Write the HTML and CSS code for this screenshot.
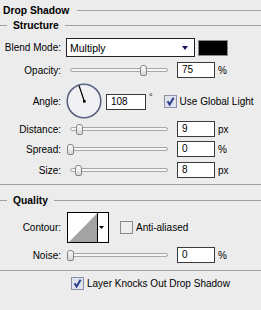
FILE: index.html
```html
<!DOCTYPE html>
<html>
<head>
<meta charset="utf-8">
<link rel="stylesheet" href="styles.css">
</head>
<body>
<div class="panel">
  <div class="title-row"><span class="title">Drop Shadow</span><span class="rule"></span></div>
  <div class="group-head"><span class="rule stub"></span><span class="group-title">Structure</span><span class="rule"></span></div>

  <div class="row row-blend">
    <span class="lbl">Blend Mode:</span>
    <div class="select"><span>Multiply</span><span class="arrow"></span></div>
    <div class="swatch"></div>
  </div>

  <div class="row row-slider r-opacity">
    <span class="lbl">Opacity:</span>
    <div class="slider"><div class="track"></div><div class="thumb" style="left:74px"></div></div>
    <div class="field">75</div><span class="unit">%</span>
  </div>

  <div class="row row-angle">
    <span class="lbl">Angle:</span>
    <svg class="dial" width="36" height="36" viewBox="0 0 36 36">
      <circle cx="18" cy="18" r="16.8" fill="#f1f1f3" stroke="#5b6283" stroke-width="1.6"/>
      <line x1="18.3" y1="18.3" x2="13" y2="2.5" stroke="#000" stroke-width="1.2"/>
      <rect x="17" y="17" width="2.6" height="2.6" fill="#000"/>
    </svg>
    <div class="field angle">108</div><span class="deg">°</span>
    <svg class="cb cb-global" width="13" height="13" viewBox="0 0 13 13">
      <rect x="0.5" y="0.5" width="12" height="12" fill="#dfe1ec" stroke="#8a90a6"/>
      <path d="M3.6 6.3 L5.6 9.6 L9.6 2.8" stroke="#2b3f8e" stroke-width="2" fill="none"/>
    </svg>
    <span class="cb-text">Use Global Light</span>
  </div>

  <div class="row row-slider r-distance">
    <span class="lbl">Distance:</span>
    <div class="slider"><div class="track"></div><div class="thumb" style="left:10px"></div></div>
    <div class="field">9</div><span class="unit">px</span>
  </div>

  <div class="row row-slider r-spread">
    <span class="lbl">Spread:</span>
    <div class="slider"><div class="track"></div><div class="thumb" style="left:1px"></div></div>
    <div class="field">0</div><span class="unit">%</span>
  </div>

  <div class="row row-slider r-size">
    <span class="lbl">Size:</span>
    <div class="slider"><div class="track"></div><div class="thumb" style="left:9px"></div></div>
    <div class="field">8</div><span class="unit">px</span>
  </div>

  <div class="sep sep-1"></div>

  <div class="group-head quality"><span class="rule stub"></span><span class="group-title">Quality</span><span class="rule"></span></div>

  <div class="row row-contour">
    <span class="lbl">Contour:</span>
    <svg class="contour" width="42" height="31" viewBox="0 0 42 31">
      <rect x="0.5" y="0.5" width="41" height="30" fill="#fff" stroke="#000"/>
      <polygon points="2,30 30,1.5 30,30" fill="#a3a3a3"/>
      <line x1="30.5" y1="0" x2="30.5" y2="31" stroke="#000"/>
      <polygon points="32,14 37,14 34.5,17" fill="#000"/>
    </svg>
    <svg class="cb cb-anti" width="13" height="13" viewBox="0 0 13 13">
      <rect x="0.5" y="0.5" width="12" height="12" fill="#ededed" stroke="#8a8a8a"/>
    </svg>
    <span class="cb-text">Anti-aliased</span>
  </div>

  <div class="row row-slider r-noise">
    <span class="lbl">Noise:</span>
    <div class="slider"><div class="track"></div><div class="thumb" style="left:1px"></div></div>
    <div class="field">0</div><span class="unit">%</span>
  </div>

  <div class="sep sep-2"></div>

  <div class="row row-knock">
    <svg class="cb" width="13" height="13" viewBox="0 0 13 13">
      <rect x="0.5" y="0.5" width="12" height="12" fill="#dfe1ec" stroke="#8a90a6"/>
      <path d="M3.6 6.3 L5.6 9.6 L9.6 2.8" stroke="#2b3f8e" stroke-width="2" fill="none"/>
    </svg>
    <span class="cb-text">Layer Knocks Out Drop Shadow</span>
  </div>
</div>
</body>
</html>
```

FILE: styles.css
```css
body {
  margin: 0;
  background: #ececec;
  font: 10px "Liberation Sans", Arial, sans-serif;
  color: #000;
}

.panel {
  width: 261px;
  height: 310px;
  overflow: hidden;
}

.title-row {
  display: flex;
  align-items: center;
  height: 21px;
  padding-left: 3px;
  gap: 8px;
}

.title,
.group-title {
  font-weight: bold;
  font-size: 10.3px;
}

.rule {
  flex: 1;
  height: 1px;
  background: #a0a0a0;
}

.group-head {
  display: flex;
  align-items: center;
  height: 9px;
  gap: 6px;
}

.rule.stub {
  flex: 0 0 7px;
}

.row {
  display: flex;
  align-items: center;
}

.lbl {
  flex: none;
  width: 61px;
  text-align: right;
}

/* Blend mode */
.row-blend {
  height: 19px;
  margin-top: 8px;
}

.select {
  flex: none;
  margin-left: 5px;
  width: 129px;
  height: 19px;
  box-sizing: border-box;
  border: 1px solid #222;
  background: #fff;
  display: flex;
  align-items: center;
  justify-content: space-between;
  padding: 0 6px 0 3px;
  font-size: 10.5px;
}

.arrow {
  width: 0;
  height: 0;
  border-left: 3.5px solid transparent;
  border-right: 3.5px solid transparent;
  border-top: 4px solid #14145a;
}

.swatch {
  flex: none;
  margin-left: 3px;
  width: 30px;
  height: 16px;
  box-sizing: border-box;
  border: 1px solid #8a8a8a;
  background: #000;
}

/* Sliders */
.row-slider {
  height: 16px;
}

.r-opacity { margin-top: 5px; }
.r-distance { margin-top: 2px; }
.r-spread { margin-top: 4px; }
.r-size { margin-top: 5px; }
.r-noise { margin-top: 4px; }

.slider {
  position: relative;
  flex: none;
  margin-left: 5px;
  width: 106px;
  height: 16px;
}

.track {
  margin: 6px 0 0 4px;
  width: 98px;
  height: 4px;
  box-sizing: border-box;
  border: 1px solid #a8a8a8;
  border-radius: 2px;
  background: #f6f6f6;
}

.thumb {
  position: absolute;
  top: 3px;
  width: 7px;
  height: 11px;
  box-sizing: border-box;
  border: 1px solid #858585;
  border-radius: 3px 3px 2px 2px;
  background: linear-gradient(#fdfdfd, #d6d6d6);
}

.field {
  flex: none;
  margin-left: 5px;
  width: 38px;
  height: 16px;
  box-sizing: border-box;
  border: 1px solid #3a3a3a;
  background: #fff;
  padding-left: 4px;
  line-height: 14px;
}

.unit {
  margin-left: 3px;
}

/* Angle */
.row-angle {
  height: 36px;
  margin-top: 5px;
}

.dial {
  flex: none;
  margin-left: 5px;
}

.field.angle {
  margin-left: 4px;
  width: 40px;
  position: relative;
  top: 1px;
}

.deg {
  margin-left: 3px;
  align-self: flex-start;
  margin-top: 9px;
  font-size: 9px;
}

.cb {
  flex: none;
  display: block;
}

.cb-global {
  margin-left: 11px;
}

.cb-text {
  margin-left: 3px;
  white-space: nowrap;
}

/* Separators */
.sep {
  height: 1px;
  background: #a0a0a0;
}

.sep-1 { margin-top: 6px; }
.sep-2 { margin-top: 7px; }

.quality {
  margin-top: 11px;
}

/* Contour */
.row-contour {
  height: 31px;
  margin-top: 7px;
}

.contour {
  flex: none;
  margin-left: 6px;
  display: block;
}

.cb-anti {
  margin-left: 11px;
}

/* Layer knocks out */
.row-knock {
  height: 13px;
  margin-top: 6px;
  padding-left: 71px;
}
```
